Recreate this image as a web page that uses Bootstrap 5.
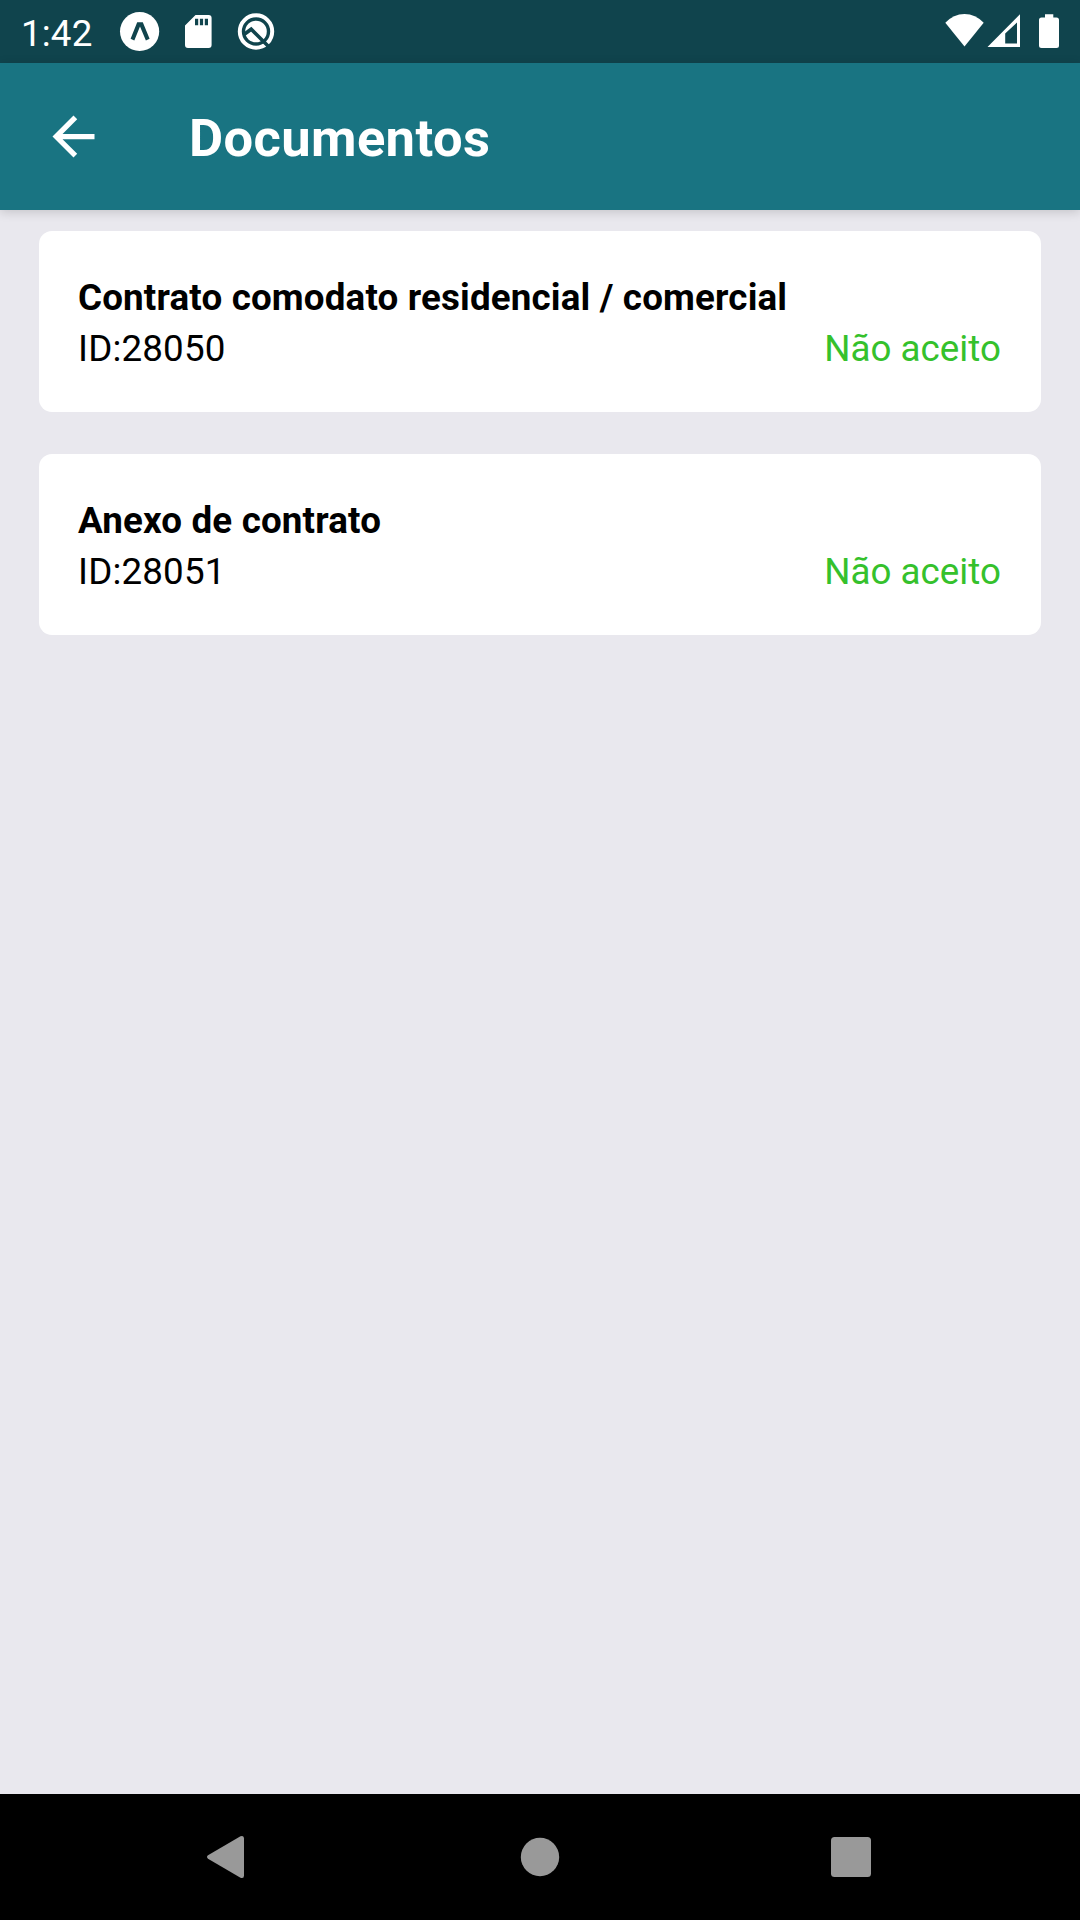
<!DOCTYPE html>
<html lang="pt-BR">
<head>
<meta charset="utf-8">
<meta name="viewport" content="width=device-width, initial-scale=1">
<title>Documentos</title>
<link href="https://cdn.jsdelivr.net/npm/bootstrap@5.3.0/dist/css/bootstrap.min.css" rel="stylesheet">
<style>
body { font-family: Roboto, "Noto Sans", sans-serif; font-size: 36.75px; line-height: 43px; letter-spacing: .16px; color: #000; background: #e9e8ee; }
svg { display: block; flex: none; }
.status-strip { height: 63px; background: #10444d; padding: 0 21px; }
.clock { line-height: 43px; padding-top: 3px; margin-right: 25.5px; }
.app-header { height: 147px; background: #197482; padding: 0 42px; box-shadow: 0 2px 10px rgba(0,0,0,.16); z-index: 1; }
.app-title { font-size: 52.5px; line-height: 62px; letter-spacing: .38px; margin: 3px 0 0 84px; }
.doc-list { padding: 21px 39px; gap: 42px; }
.doc-card { height: 181px; padding: 45px 40px 0 39px; border-radius: 13px; gap: 8px; border: 0; color: #000; }
.state-text { color: #35c12c; letter-spacing: .03px; }
.nav-strip { height: 126px; background: #000; padding: 0 207px; }
</style>
<script src="https://cdn.jsdelivr.net/npm/bootstrap@5.3.0/dist/js/bootstrap.bundle.min.js"></script>
</head>
<body>
<div class="d-flex flex-column vh-100 overflow-hidden">
  <div class="status-strip d-flex align-items-center justify-content-between text-white">
    <div class="d-flex align-items-center">
      <span class="clock">1:42</span>
      <svg width="160" height="63" viewBox="118 0 160 63" fill="#fff">
        <circle cx="139.600" cy="31.500" r="19.600"/>
        <path d="M130.600 38.700 137.200 22.200h5.600L149.600 38.700l-3.700 1.700-5.900-13.800-5.700 13.800z" fill="#10444d"/>
        <path fill-rule="evenodd" d="M195.500 15H208.600a3 3 0 0 1 3 3V45a3 3 0 0 1-3 3H188a3 3 0 0 1-3-3V25.500zM195 18.700v6.600h3.200v-6.600zm4.900 0v6.600h3.200v-6.600zm4.900 0v6.600h3.200v-6.600z"/>
        <circle cx="256" cy="31.500" r="16.200" fill="none" stroke="#fff" stroke-width="4"/>
        <circle cx="256" cy="31.500" r="10.800"/>
        <path d="M244 34.500 251.200 29.200 268.800 46.800" fill="none" stroke="#10444d" stroke-width="3.600"/>
      </svg>
    </div>
    <svg width="114" height="63" viewBox="945 0 114 63" fill="#fff">
      <path d="M945.300 22.800Q953.500 14 964.500 14T983.700 22.800L964.500 46.500z"/>
      <path fill-rule="evenodd" d="M1020 14.200V47H987.500zM1017 22.500 1005.200 33.500V43.500H1017z"/>
      <path d="M1045 14.200h8.300v3.300h3.200a2.500 2.500 0 0 1 2.500 2.500v25.500a2.500 2.500 0 0 1-2.500 2.500h-15a2.500 2.500 0 0 1-2.500-2.500V20a2.500 2.500 0 0 1 2.500-2.500h3.500z"/>
    </svg>
  </div>

  <header class="app-header d-flex align-items-center position-relative text-white">
    <svg width="63" height="63" viewBox="0 0 24 24" fill="#fff" role="img" aria-label="Voltar"><path d="M20 11H7.830l5.590-5.590L12 4l-8 8 8 8 1.410-1.410L7.830 13H20z"/></svg>
    <h1 class="app-title fw-bold">Documentos</h1>
  </header>

  <main class="doc-list flex-grow-1 d-flex flex-column">
    <article class="doc-card card">
      <div class="fw-bold">Contrato comodato residencial / comercial</div>
      <div class="d-flex justify-content-between"><span>ID:28050</span><span class="state-text">Não aceito</span></div>
    </article>
    <article class="doc-card card">
      <div class="fw-bold">Anexo de contrato</div>
      <div class="d-flex justify-content-between"><span>ID:28051</span><span class="state-text">Não aceito</span></div>
    </article>
  </main>

  <nav class="nav-strip d-flex align-items-center justify-content-between">
    <svg width="42" height="44" viewBox="0 0 42 44" fill="#999"><path d="M1 20.300 33.500 1.300Q37 0 37 3.500V40.500Q37 44 33.500 42.700L1 23.700Q-1 22 1 20.300z"/></svg>
    <svg width="44" height="44" viewBox="0 0 44 44" fill="#999"><circle cx="22" cy="22" r="19.200"/></svg>
    <svg width="42" height="44" viewBox="0 0 42 44" fill="#999"><rect x="0" y="2" width="40" height="40" rx="3.500"/></svg>
  </nav>
</div>
</body>
</html>
